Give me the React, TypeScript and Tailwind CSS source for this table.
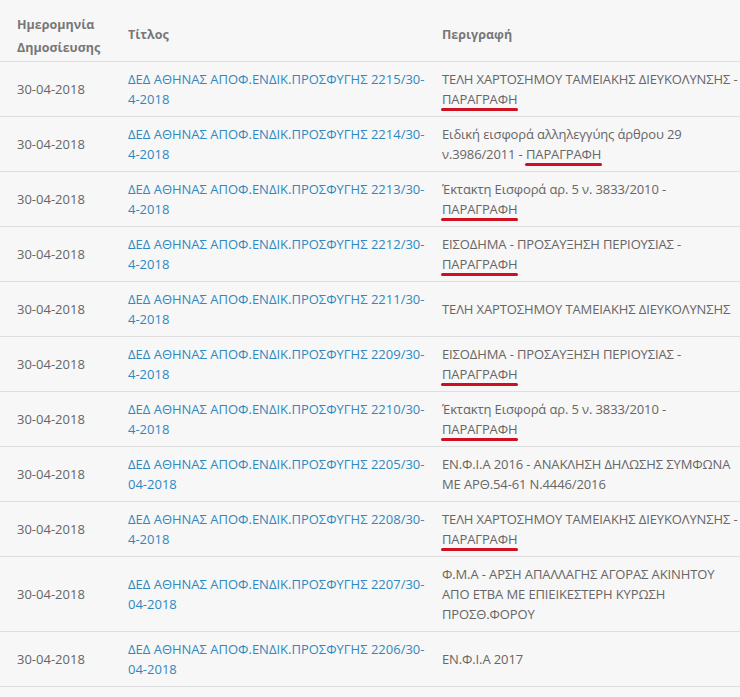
type Row = {
  title: string[];
  desc: string[];
  para?: boolean;
};

const rows: Row[] = [
  { title: ["ΔΕΔ ΑΘΗΝΑΣ ΑΠΟΦ.ΕΝΔΙΚ.ΠΡΟΣΦΥΓΗΣ 2215/30-", "4-2018"], desc: ["ΤΕΛΗ ΧΑΡΤΟΣΗΜΟΥ ΤΑΜΕΙΑΚΗΣ ΔΙΕΥΚΟΛΥΝΣΗΣ -", ""], para: true },
  { title: ["ΔΕΔ ΑΘΗΝΑΣ ΑΠΟΦ.ΕΝΔΙΚ.ΠΡΟΣΦΥΓΗΣ 2214/30-", "4-2018"], desc: ["Ειδική εισφορά αλληλεγγύης άρθρου 29", "ν.3986/2011 - "], para: true },
  { title: ["ΔΕΔ ΑΘΗΝΑΣ ΑΠΟΦ.ΕΝΔΙΚ.ΠΡΟΣΦΥΓΗΣ 2213/30-", "4-2018"], desc: ["Έκτακτη Εισφορά αρ. 5 ν. 3833/2010 -", ""], para: true },
  { title: ["ΔΕΔ ΑΘΗΝΑΣ ΑΠΟΦ.ΕΝΔΙΚ.ΠΡΟΣΦΥΓΗΣ 2212/30-", "4-2018"], desc: ["ΕΙΣΟΔΗΜΑ - ΠΡΟΣΑΥΞΗΣΗ ΠΕΡΙΟΥΣΙΑΣ -", ""], para: true },
  { title: ["ΔΕΔ ΑΘΗΝΑΣ ΑΠΟΦ.ΕΝΔΙΚ.ΠΡΟΣΦΥΓΗΣ 2211/30-", "4-2018"], desc: ["ΤΕΛΗ ΧΑΡΤΟΣΗΜΟΥ ΤΑΜΕΙΑΚΗΣ ΔΙΕΥΚΟΛΥΝΣΗΣ"] },
  { title: ["ΔΕΔ ΑΘΗΝΑΣ ΑΠΟΦ.ΕΝΔΙΚ.ΠΡΟΣΦΥΓΗΣ 2209/30-", "4-2018"], desc: ["ΕΙΣΟΔΗΜΑ - ΠΡΟΣΑΥΞΗΣΗ ΠΕΡΙΟΥΣΙΑΣ -", ""], para: true },
  { title: ["ΔΕΔ ΑΘΗΝΑΣ ΑΠΟΦ.ΕΝΔΙΚ.ΠΡΟΣΦΥΓΗΣ 2210/30-", "4-2018"], desc: ["Έκτακτη Εισφορά αρ. 5 ν. 3833/2010 -", ""], para: true },
  { title: ["ΔΕΔ ΑΘΗΝΑΣ ΑΠΟΦ.ΕΝΔΙΚ.ΠΡΟΣΦΥΓΗΣ 2205/30-", "04-2018"], desc: ["ΕΝ.Φ.Ι.Α 2016 - ΑΝΑΚΛΗΣΗ ΔΗΛΩΣΗΣ ΣΥΜΦΩΝΑ", "ΜΕ ΑΡΘ.54-61 Ν.4446/2016"] },
  { title: ["ΔΕΔ ΑΘΗΝΑΣ ΑΠΟΦ.ΕΝΔΙΚ.ΠΡΟΣΦΥΓΗΣ 2208/30-", "4-2018"], desc: ["ΤΕΛΗ ΧΑΡΤΟΣΗΜΟΥ ΤΑΜΕΙΑΚΗΣ ΔΙΕΥΚΟΛΥΝΣΗΣ -", ""], para: true },
  { title: ["ΔΕΔ ΑΘΗΝΑΣ ΑΠΟΦ.ΕΝΔΙΚ.ΠΡΟΣΦΥΓΗΣ 2207/30-", "04-2018"], desc: ["Φ.Μ.Α - ΑΡΣΗ ΑΠΑΛΛΑΓΗΣ ΑΓΟΡΑΣ ΑΚΙΝΗΤΟΥ", "ΑΠΟ ΕΤΒΑ ΜΕ ΕΠΙΕΙΚΕΣΤΕΡΗ ΚΥΡΩΣΗ", "ΠΡΟΣΘ.ΦΟΡΟΥ"] },
  { title: ["ΔΕΔ ΑΘΗΝΑΣ ΑΠΟΦ.ΕΝΔΙΚ.ΠΡΟΣΦΥΓΗΣ 2206/30-", "04-2018"], desc: ["ΕΝ.Φ.Ι.Α 2017"] },
];

function Paragraph() {
  return (
    <span className="relative">
      ΠΑΡΑΓΡΑΦΗ
      <span className="absolute -left-[1px] -right-[1px] -bottom-[3px] h-[3px] rounded-full bg-[#cf1020]" />
    </span>
  );
}

function Lines({ lines, para }: { lines: string[]; para?: boolean }) {
  return (
    <>
      {lines.map((l, i) => (
        <span key={i} className="block whitespace-nowrap">
          {l}
          {para && i === lines.length - 1 && <Paragraph />}
        </span>
      ))}
    </>
  );
}

export default function App() {
  return (
    <div className="min-h-screen w-[740px] overflow-hidden bg-[#f7f7f7] font-['Open_Sans',sans-serif] text-[13px] text-[#666]">
      <table className="w-[740px] table-fixed border-collapse">
        <colgroup>
          <col className="w-[117px]" />
          <col className="w-[313px]" />
          <col />
        </colgroup>
        <thead>
          <tr className="border-b border-[#dedede]">
            <th className="h-[61px] pt-[11px] pl-[17px] text-left align-middle text-[12.5px] font-bold leading-[23px] text-[#777]">
              Ημερομηνία
              <br />
              Δημοσίευσης
            </th>
            <th className="pt-[11px] pl-[11px] text-left align-middle text-[12.5px] font-bold text-[#777]">Τίτλος</th>
            <th className="pt-[11px] pl-[12px] text-left align-middle text-[12.5px] font-bold text-[#777]">Περιγραφή</th>
          </tr>
        </thead>
        <tbody>
          {rows.map((r, i) => (
            <tr key={i} className="border-b border-[#dedede]">
              <td className="py-[7px] pl-[17px] align-middle leading-[20px]">30-04-2018</td>
              <td className="py-[7px] pl-[11px] align-middle leading-[20px] text-[#2f88c0]">
                <Lines lines={r.title} />
              </td>
              <td className="py-[7px] pl-[12px] align-middle leading-[20px] tracking-[-0.12px]">
                <Lines lines={r.desc} para={r.para} />
              </td>
            </tr>
          ))}
          <tr>
            <td className="h-[40px]" />
            <td />
            <td />
          </tr>
        </tbody>
      </table>
    </div>
  );
}
